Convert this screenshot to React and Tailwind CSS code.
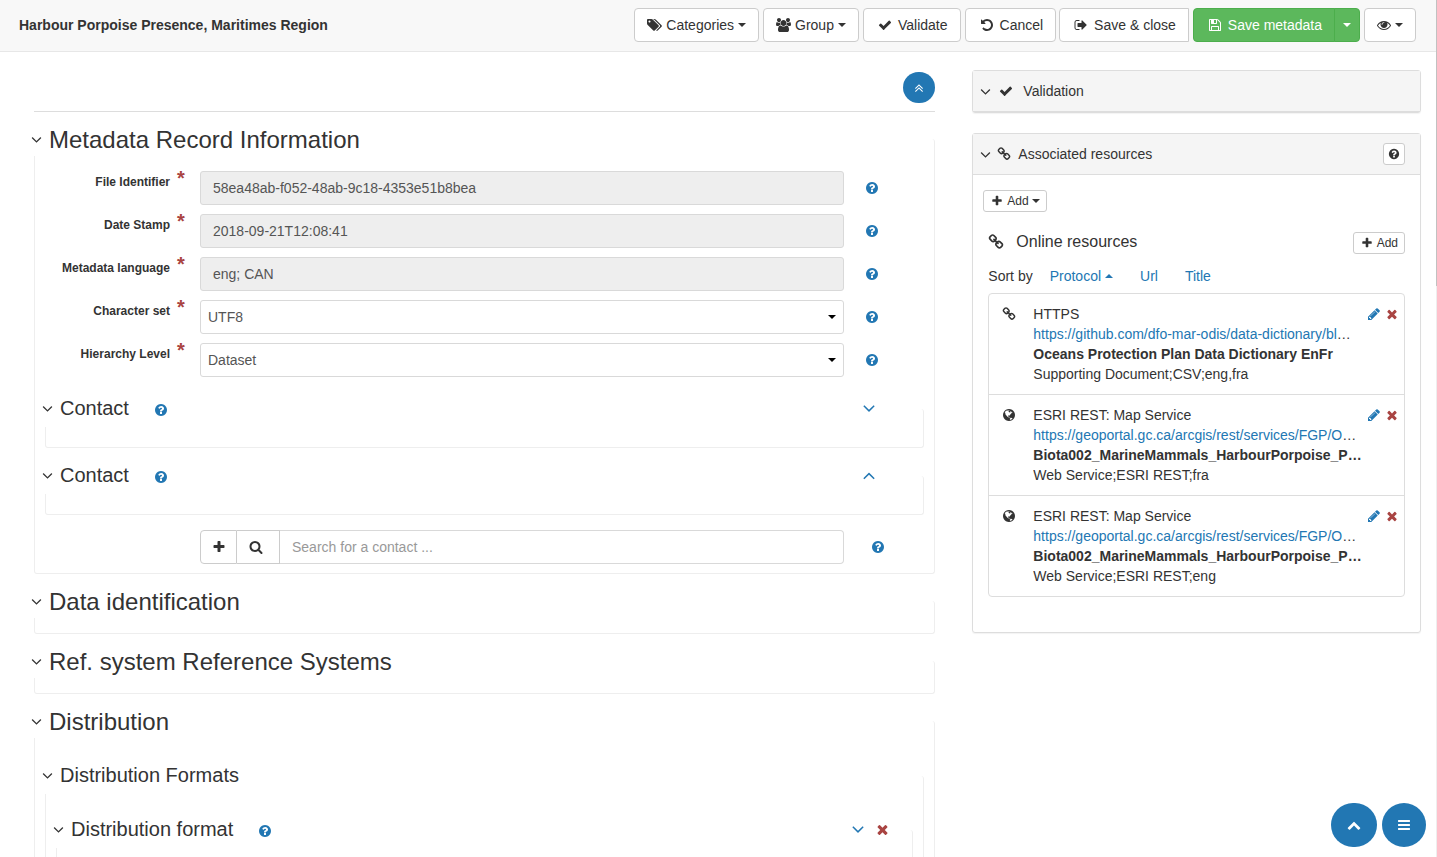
import React from "react";

const PATHS = {
  angleDown:
    "M1395 736q0 13-10 23l-466 466q-10 10-23 10t-23-10l-466-466q-10-10-10-23t10-23l50-50q10-10 23-10t23 10l393 393 393-393q10-10 23-10t23 10l50 50q10 10 10 23z",
  angleUp:
    "M1395 1184q0 13-10 23l-50 50q-10 10-23 10t-23-10l-393-393-393 393q-10 10-23 10t-23-10l-50-50q-10-10-10-23t10-23l466-466q10-10 23-10t23 10l466 466q10 10 10 23z",
  angleDoubleUp:
    "M1395 1312q0 13-10 23l-50 50q-10 10-23 10t-23-10l-393-393-393 393q-10 10-23 10t-23-10l-50-50q-10-10-10-23t10-23l466-466q10-10 23-10t23 10l466 466q10 10 10 23zm0-384q0 13-10 23l-50 50q-10 10-23 10t-23-10l-393-393-393 393q-10 10-23 10t-23-10l-50-50q-10-10-10-23t10-23l466-466q10-10 23-10t23 10l466 466q10 10 10 23z",
  check:
    "M1671 566q0 40-28 68l-724 724-136 136q-28 28-68 28t-68-28l-136-136-362-362q-28-28-28-68t28-68l136-136q28-28 68-28t68 28l294 295 656-657q28-28 68-28t68 28l136 136q28 28 28 68z",
  tags: "M448 448q0-53-37.5-90.5t-90.5-37.5-90.5 37.5-37.5 90.5 37.5 90.5 90.5 37.5 90.5-37.5 37.5-90.5zm1067 576q0 53-37 90l-491 492q-39 37-91 37-53 0-90-37l-715-716q-38-37-64.5-101t-26.5-117v-416q0-52 38-90t90-38h416q53 0 117 26.5t102 64.5l715 714q37 39 37 91zm384 0q0 53-37 90l-491 492q-39 37-91 37-36 0-59-14t-53-45l470-470q37-37 37-90 0-52-37-91l-715-714q-38-38-102-64.5t-117-26.5h224q53 0 117 26.5t102 64.5l715 714q37 39 37 91z",
  undo: "M1664 896q0 156-61 298t-164 245-245 164-298 61q-172 0-327-72.5t-264-204.5q-7-10-6.5-22.5t8.5-20.5l137-138q10-9 25-9 16 2 23 12 73 95 179 147t225 52q104 0 198.5-40.5t163.5-109.5 109.5-163.5 40.5-198.5-40.5-198.5-109.5-163.5-163.5-109.5-198.5-40.5q-98 0-188 35.5t-160 101.5l137 138q31 30 14 69-17 40-59 40h-448q-26 0-45-19t-19-45v-448q0-42 40-59 39-17 69 14l130 129q107-101 244.5-156.5t284.5-55.5q156 0 298 61t245 164 164 245 61 298z",
  signOut:
    "M704 1440q0 4 1 20t.5 26.5-3 23.5-10 19.5-20.5 6.5h-320q-119 0-203.5-84.5t-84.5-203.5v-704q0-119 84.5-203.5t203.5-84.5h320q13 0 22.5 9.5t9.5 22.5q0 4 1 20t.5 26.5-3 23.5-10 19.5-20.5 6.5h-320q-66 0-113 47t-47 113v704q0 66 47 113t113 47h312l11.5 1 11.5 3 8 5.5 7 9 2 13.5zm928-544q0 26-19 45l-544 544q-19 19-45 19t-45-19-19-45v-288h-448q-26 0-45-19t-19-45v-384q0-26 19-45t45-19h448v-288q0-26 19-45t45-19 45 19l544 544q19 19 19 45z",
  floppy:
    "M512 1536h768v-384h-768v384zm896 0h128v-896q0-14-10-38.5t-20-34.5l-281-281q-10-10-34-20t-39-10v416q0 40-28 68t-68 28h-576q-40 0-68-28t-28-68v-416h-128v1280h128v-416q0-40 28-68t68-28h832q40 0 68 28t28 68v416zm-384-928v-320q0-13-9.5-22.5t-22.5-9.5h-192q-13 0-22.5 9.5t-9.5 22.5v320q0 13 9.5 22.5t22.5 9.5h192q13 0 22.5-9.5t9.5-22.5zm640 32v928q0 40-28 68t-68 28h-1344q-40 0-68-28t-28-68v-1344q0-40 28-68t68-28h928q40 0 88 20t76 48l280 280q28 28 48 76t20 88z",
  eye: "M1664 960q-152-236-381-353 61 104 61 225 0 185-131.5 316.5t-316.5 131.5-316.5-131.5-131.5-316.5q0-121 61-225-229 117-381 353 133 205 333.5 326.5t434.5 121.5 434.5-121.5 333.5-326.5zm-720-384q0-20-14-34t-34-14q-125 0-214.5 89.5t-89.5 214.5q0 20 14 34t34 14 34-14 14-34q0-86 61-147t147-61q20 0 34-14t14-34zm848 384q0 34-20 69-140 230-376.5 368.5t-499.5 138.5-499.5-139-376.5-368q-20-35-20-69t20-69q140-229 376.5-368t499.5-139 499.5 139 376.5 368q20 35 20 69z",
  users:
    "M529 896q-162 5-265 128h-134q-82 0-138-40.5t-56-118.5q0-353 124-353 6 0 43.5 21t97.5 42.5 119 21.5q67 0 133-23-5 37-5 66 0 139 81 256zm1071 637q0 120-73 189.5t-194 69.5h-874q-121 0-194-69.5t-73-189.5q0-53 3.5-103.5t14-109 26.5-108.5 43-97.5 62-81 85.5-53.5 111.5-20q10 0 43 21.5t73 48 107 48 135 21.5 135-21.5 107-48 73-48 43-21.5q61 0 111.5 20t85.5 53.5 62 81 43 97.5 26.5 108.5 14 109 3.5 103.5zm-1024-1277q0 106-75 181t-181 75-181-75-75-181 75-181 181-75 181 75 75 181zm704 384q0 159-112.5 271.5t-271.5 112.5-271.5-112.5-112.5-271.5 112.5-271.5 271.5-112.5 271.5 112.5 112.5 271.5zm576 225q0 78-56 118.5t-138 40.5h-134q-103-123-265-128 81-117 81-256 0-29-5-66 66 23 133 23 59 0 119-21.5t97.5-42.5 43.5-21q124 0 124 353zm-128-609q0 106-75 181t-181 75-181-75-75-181 75-181 181-75 181 75 75 181z",
  help: "M1024 1376v-192q0-14-9-23t-23-9h-192q-14 0-23 9t-9 23v192q0 14 9 23t23 9h192q14 0 23-9t9-23zm256-672q0-88-55.5-163t-138.5-116-170-41q-243 0-371 213-15 24 8 42l132 100q7 6 19 6 16 0 25-12 53-68 86-92 34-24 86-24 48 0 85.5 26t37.5 59q0 38-20 61t-68 45q-63 28-115.5 86.5t-52.5 125.5v36q0 14 9 23t23 9h192q14 0 23-9t9-23q0-19 21.5-49.5t54.5-49.5q32-18 49-28.5t46-35 44.5-48 28-60.5 12.5-81zm384 192q0 209-103 385.5t-279.5 279.5-385.5 103-385.5-103-279.5-279.5-103-385.5 103-385.5 279.5-279.5 385.5-103 385.5 103 279.5 279.5 103 385.5z",
  plus: "M1600 736v192q0 40-28 68t-68 28h-416v416q0 40-28 68t-68 28h-192q-40 0-68-28t-28-68v-416h-416q-40 0-68-28t-28-68v-192q0-40 28-68t68-28h416v-416q0-40 28-68t68-28h192q40 0 68 28t28 68v416h416q40 0 68 28t28 68z",
  search:
    "M1216 832q0-185-131.5-316.5t-316.5-131.5-316.5 131.5-131.5 316.5 131.5 316.5 316.5 131.5 316.5-131.5 131.5-316.5zm512 832q0 52-38 90t-90 38q-54 0-90-38l-343-342q-179 124-399 124-143 0-273.5-55.5t-225-150-150-225-55.5-273.5 55.5-273.5 150-225 225-150 273.5-55.5 273.5 55.5 225 150 150 225 55.5 273.5q0 220-124 399l343 343q37 37 37 90z",
  link: "M1520 1216q0-40-28-68l-208-208q-28-28-68-28-42 0-72 32 3 3 19 18.5t21.5 21.5 15 19 13 25.5 3.5 27.5q0 40-28 68t-68 28q-15 0-27.5-3.5t-25.5-13-19-15-21.5-21.5-18.5-19q-33 31-33 73 0 40 28 68l206 207q27 27 68 27 40 0 68-26l147-146q28-28 28-67zm-703-705q0-40-28-68l-206-207q-28-28-68-28-39 0-68 27l-147 146q-28 28-28 67 0 40 28 68l208 208q27 27 68 27 42 0 72-31-3-3-19-18.5t-21.5-21.5-15-19-13-25.5-3.5-27.5q0-40 28-68t68-28q15 0 27.5 3.5t25.5 13 19 15 21.5 21.5 18.5 19q33-31 33-73zm895 705q0 120-85 203l-147 146q-83 83-203 83-121 0-204-85l-206-207q-83-83-83-203 0-123 88-209l-88-88q-86 88-208 88-120 0-204-84l-208-208q-84-84-84-204t85-203l147-146q83-83 203-83 121 0 204 85l206 207q83 83 83 203 0 123-88 209l88 88q86-88 208-88 120 0 204 84l208 208q84 84 84 204z",
  pencil:
    "M491 1536l91-91-235-235-91 91v107h128v128h107zm523-928q0-22-22-22-10 0-17 7l-542 542q-7 7-7 17 0 22 22 22 10 0 17-7l542-542q7-7 7-17zm-54-192l416 416-832 832h-416v-416zm683 96q0 53-37 90l-166 166-416-416 166-165q36-38 90-38 53 0 91 38l235 234q37 39 37 91z",
  times:
    "M1490 1322q0 40-28 68l-136 136q-28 28-68 28t-68-28l-294-294-294 294q-28 28-68 28t-68-28l-136-136q-28-28-28-68t28-68l294-294-294-294q-28-28-28-68t28-68l136-136q28-28 68-28t68 28l294 294 294-294q28-28 68-28t68 28l136 136q28 28 28 68t-28 68l-294 294 294 294q28 28 28 68z",
  chevronUp:
    "M1683 1331l-166 165q-19 19-45 19t-45-19l-531-531-531 531q-19 19-45 19t-45-19l-166-165q-19-19-19-45.5t19-45.5l742-741q19-19 45-19t45 19l742 741q19 19 19 45.5t-19 45.5z",
  bars: "M1664 1344v128q0 26-19 45t-45 19h-1408q-26 0-45-19t-19-45v-128q0-26 19-45t45-19h1408q26 0 45 19t19 45zm0-512v128q0 26-19 45t-45 19h-1408q-26 0-45-19t-19-45v-128q0-26 19-45t45-19h1408q26 0 45 19t19 45zm0-512v128q0 26-19 45t-45 19h-1408q-26 0-45-19t-19-45v-128q0-26 19-45t45-19h1408q26 0 45 19t19 45z",
  globe:
    "M896 128q209 0 385.5 103t279.5 279.5 103 385.5-103 385.5-279.5 279.5-385.5 103-385.5-103-279.5-279.5-103-385.5 103-385.5 279.5-279.5 385.5-103zm274 521q-2 1-9.5 9.5t-13.5 9.5q2 0 4.5-5t5-11 3.5-7q6-7 22-15 14-6 52-12 34-8 51 11-2-2 9.5-13t14.5-12q3-2 15-4.5t15-7.5l2-22q-12 1-17.5-7t-6.5-21q0 2-6 8 0-7-4.5-8t-11.5 1-9 1q-10-3-15-7.5t-8-16.5-4-15q-2-5-9.5-10.5t-9.5-10.5q-1-2-2.5-5.5t-3-6.5-4-5.5-5.5-2.5-7 5-7.5 10-4.5 5q-3-2-6-1.5t-4.5 1-4.5 3-5 3.5q-3 2-8.5 3t-8.5 2q15-5-1-11-10-4-16-3 9-4 7.5-12t-8.5-14h5q-1-4-8.5-8.5t-17.5-8.5-13-6q-8-5-34-9.5t-33-.5q-5 6-4.5 10.5t4 14 3.5 12.5q1 6-5.5 13t-6.5 12q0 7 14 15.5t10 21.5q-3 8-16 16t-16 12q-5 8-1.5 18.5t10.5 16.5q2 2 1.5 4t-3.5 4.5-5.5 4-6.5 3.5l-3 2q-11 5-20.5-6t-13.5-26q-7-25-16-30-23-8-29 1-5-13-41-26-25-9-58-4 6-1 0-15-7-15-19-12 3-6 4-17.5t1-13.5q3-13 12-23 1-1 7-8.5t9.5-13.5.5-6q35 4 50-11 5-5 11.5-17t10.5-17q9-6 14-5.5t14.5 5.5 14.5 5q14 1 15.5-11t-7.5-20q12 1 3-17-4-7-8-9-12-4-27 5-8 4 2 8-1-1-9.5 10.5t-16.5 17.5-16-5q-1-1-5.5-13.5t-9.5-13.5q-8 0-16 15 3-8-11-15t-24-8q19-12-8-27-7-4-20.5-5t-19.5 4q-5 7-5.5 11.5t5 8 10.5 5.5 11.5 4 8.5 3q14 10 8 14-2 1-8.5 3.5t-11.5 4.5-6 4q-3 4 0 14t-2 14q-5-5-9-17.5t-7-16.5q7 9-25 6l-10-1q-4 0-16 2t-20.5 1-13.5-8q-4-8 0-20 1-4 4-2-4-3-11-9.5t-10-8.5q-46 15-94 41 6 1 12-1 5-2 13-6.5t10-5.5q34-14 42-7l5-5q14 16 20 25-7-4-30-1-20 6-22 12 7 12 5 18-4-3-11.5-10t-14.5-11-15-5q-16 0-22 1-146 80-235 222 7 7 12 8 4 1 5 9t2.5 11 11.5-3q9 8 3 19 1-1 44 27 19 17 21 21 3 11-10 18-1-2-9-9t-9-4q-3 5 .5 18.5t10.5 12.5q-7 0-9.5 16t-2.5 35.5-1 23.5l2 1q-3 12 5.5 34.5t21.5 19.5q-13 3 20 43 6 8 8 9 3 2 12 7.5t15 10 10 10.5q4 5 10 22.5t14 23.5q-2 6 9.5 20t10.5 23q-1 0-2.5 1t-2.5 1q3 7 15.5 14t15.5 13q1 3 2 10t3 11 8 2q2-20-24-62-15-25-17-29-3-5-5.5-15.5t-4.5-14.5q2 0 6 1.5t8.5 3.5 7.5 4 2 3q-3 7 2 17.5t12 18.5 17 19 12 13q6 6 14 19.5t0 13.5q9 0 20 10.5t17 19.5q5 8 8 26t5 24q2 7 8.5 13.5t12.5 9.5l16 8 13 7q5 2 18.5 10.5t21.5 11.5q10 4 16 4t14.5-2.5 13.5-3.5q15-2 29 15t21 21q36 19 55 11-2 1 .5 7.5t8 15.5 9 14.5 5.5 8.5q5 6 18 15t18 15q6-4 7-9-3 8 7 20t18 10q14-3 14-32-31 15-49-18 0-1-2.5-5.5t-4-8.5-2.5-8.5 0-7.5 5-3q9 0 10-3.5t-2-12.5-4-13q-1-8-11-20t-12-15q-5 9-16 8t-16-9q0 1-1.5 5.5t-1.5 6.5q-13 0-15-1 1-3 2.5-17.5t3.5-22.5q1-4 5.5-12t7.5-14.5 4-12.5-4.5-9.5-17.5-2.5q-19 1-26 20-1 3-3 10.5t-5 11.5-9 7q-7 3-24 2t-24-5q-13-8-22.5-29t-9.5-37q0-10 2.5-26.5t3-25-5.5-24.5q3-2 9-9.5t10-10.5q2-1 4.5-1.5t4.5 0 4-1.5 3-6q-1-1-4-3-3-3-4-3 7 3 28.5-1.5t27.5 1.5q15 11 22-2 0-1-2.5-9.5t-.5-13.5q5 27 29 9 3 3 15.5 5t17.5 5q3 2 7 5.5t5.5 4.5 5-.5 8.5-6.5q10 14 12 24 11 40 19 44 7 3 11 2t4.5-9.5 0-14-1.5-12.5l-1-8v-18l-1-8q-15-3-18.5-12t1.5-18.5 15-18.5q1-1 8-3.5t15.5-6.5 12.5-8q21-19 15-35 7 0 11-9-1 0-5-3t-7.5-5-4.5-2q9-5 2-16 5-3 7.5-11t7.5-10q9 12 21 2 8-8 1-16 5-7 20.5-10.5t18.5-9.5q7 2 8-2t1-12 3-12q4-5 15-9t13-5l17-11q3-4 0-4 18 2 31-11 10-11-6-20 3-6-3-9.5t-15-5.5q3-1 11.5-.5t10.5-1.5q15-10-7-16-17-5-43 12zm-163 877q206-36 351-189-3-3-12.5-4.5t-12.5-3.5q-18-7-24-8 1-7-2.5-13t-8-9-12.5-8-11-7q-2-2-7-6t-7-5.5-7.5-4.5-8.5-2-10 1l-3 1q-3 1-5.5 2.5t-5.5 3-4 3 0 2.5q-21-17-36-22-5-1-11-5.5t-10.5-7-10-1.5-11.5 7q-5 5-6 15t-2 13q-7-5 0-17.5t2-18.5q-3-6-10.5-4.5t-12 4.5-11.5 8.5-9 6.5-8.5 5.5-8.5 7.5q-3 4-6 12t-5 11q-2-4-11.5-6.5t-9.5-5.5q2 10 4 35t5 38q7 31-12 48-27 25-29 40-4 22 12 26 0 7-8 20.5t-7 21.5q0 6 2 16z",
};

const VIEW_BOXES = { tags: "0 0 1920 1792", users: "-64 0 1920 1792" };

function Icon({ name, className = "size-3.5" }) {
  return (
    <svg
      aria-hidden="true"
      viewBox={VIEW_BOXES[name] || "0 0 1792 1792"}
      fill="currentColor"
      className={"shrink-0 " + className}
    >
      <path d={PATHS[name]} />
    </svg>
  );
}

function Caret({ up = false, className = "" }) {
  return (
    <svg aria-hidden="true" viewBox="0 0 8 4" fill="currentColor" className={"h-1 w-2 shrink-0 " + className}>
      <path d={up ? "M0 4L4 0L8 4Z" : "M0 0L4 4L8 0Z"} />
    </svg>
  );
}

function ToolButton({ icon, wide, caret, children, className = "rounded", ...rest }) {
  return (
    <button
      type="button"
      className={
        "flex h-[34px] items-center gap-1 border border-[#ccc] bg-white px-3 text-sm whitespace-nowrap text-[#333] " +
        className
      }
      {...rest}
    >
      <span className={wide ? "flex w-[18px] justify-center" : "flex"}>
        <Icon name={icon} className={VIEW_BOXES[icon] ? "h-3.5 w-[15px]" : "size-3.5"} />
      </span>
      {children}
      {caret && <Caret />}
    </button>
  );
}

function SmallButton({ children, className = "px-1.5", ...rest }) {
  return (
    <button
      type="button"
      className={
        "flex h-[22px] items-center gap-[3px] rounded-[3px] border border-[#ccc] bg-white text-xs text-[#333] " +
        className
      }
      {...rest}
    >
      {children}
    </button>
  );
}

function Help({ className = "" }) {
  return (
    <button type="button" aria-label="Help" className={"flex text-[#2277b3] " + className}>
      <Icon name="help" />
    </button>
  );
}

function Section({ title, sub, help, open, removable, className = "mt-2.5", children }) {
  return (
    <fieldset className={"min-w-0 rounded-[3px] border border-t-0 border-[#eee] px-2.5 " + className}>
      <legend
        className={
          "-ml-[17px] flex w-[calc(100%+5px)] items-center bg-white " +
          (sub ? "h-9 pb-0.5 text-[20px]" : "h-[34px] text-[24px]")
        }
      >
        <button type="button" className="flex items-center whitespace-nowrap">
          <Icon name="angleDown" className="mr-1 size-[17px]" />
          <span className={sub ? "" : "pt-0.5"}>{title}</span>
        </button>
        {help && <Help className="ml-[25px] pt-[3px]" />}
        {open !== undefined && (
          <span className="ml-auto flex items-center text-[#2277b3]">
            <button type="button" aria-label={open ? "Collapse" : "Expand"} className="flex">
              <Icon name={open ? "angleUp" : "angleDown"} className="size-5" />
            </button>
            <span className="flex w-[22px] justify-end">
              {removable && (
                <button type="button" aria-label="Remove" className="flex text-[#a94442]">
                  <Icon name="times" className="size-[15px]" />
                </button>
              )}
            </span>
          </span>
        )}
      </legend>
      {children}
    </fieldset>
  );
}

function Field({ id, label, value, options }) {
  return (
    <div className="grid grid-cols-[125px_30px_1fr_80px]">
      <label htmlFor={id} className="pt-[3px] text-right text-xs leading-4 font-bold whitespace-nowrap">
        {label}
      </label>
      <span className="pl-[7px] text-[20px] leading-[14px] font-bold text-[#a94442]">*</span>
      {options ? (
        <div className="grid items-center">
          <select
            id={id}
            defaultValue={value}
            className="col-start-1 row-start-1 h-[34px] w-full appearance-none rounded-[3px] border border-[#d9d9d9] bg-white px-[7px] text-sm text-[#555]"
          >
            {options.map((o) => (
              <option key={o}>{o}</option>
            ))}
          </select>
          <Caret className="pointer-events-none col-start-1 row-start-1 mr-2 justify-self-end text-black" />
        </div>
      ) : (
        <input
          id={id}
          type="text"
          readOnly
          value={value}
          className="h-[34px] w-full rounded-[3px] border border-[#d9d9d9] bg-[#eee] px-3 text-sm text-[#555]"
        />
      )}
      <Help className="self-center justify-self-start pl-[21px]" />
    </div>
  );
}

const RESOURCES = [
  {
    icon: "link",
    protocol: "HTTPS",
    url: "https://github.com/dfo-mar-odis/data-dictionary/bl",
    title: "Oceans Protection Plan Data Dictionary EnFr",
    info: "Supporting Document;CSV;eng,fra",
  },
  {
    icon: "globe",
    protocol: "ESRI REST: Map Service",
    url: "https://geoportal.gc.ca/arcgis/rest/services/FGP/O",
    title: "Biota002_MarineMammals_HarbourPorpoise_P…",
    info: "Web Service;ESRI REST;fra",
  },
  {
    icon: "globe",
    protocol: "ESRI REST: Map Service",
    url: "https://geoportal.gc.ca/arcgis/rest/services/FGP/O",
    title: "Biota002_MarineMammals_HarbourPorpoise_P…",
    info: "Web Service;ESRI REST;eng",
  },
];

function Resource({ icon, protocol, url, title, info }) {
  return (
    <li className="flex border-b border-[#ddd] py-2.5 pr-[5px] pl-[13px] leading-5 last:border-b-0">
      <span className="flex h-5 w-[31px] shrink-0 items-center">
        <Icon name={icon} />
      </span>
      <div className="min-w-0 flex-1 overflow-hidden whitespace-nowrap">
        <div>{protocol}</div>
        <div>
          <a href={url} className="text-[#2277b3]">
            {url}
          </a>
          …
        </div>
        <div className="font-bold">{title}</div>
        <div>{info}</div>
      </div>
      <div className="flex h-5 shrink-0 items-center gap-1">
        <button type="button" aria-label="Edit" className="flex text-[#2277b3]">
          <Icon name="pencil" />
        </button>
        <button type="button" aria-label="Delete" className="flex text-[#a94442]">
          <Icon name="times" />
        </button>
      </div>
    </li>
  );
}

export default function App() {
  return (
    <div className="flex h-screen bg-white font-['Liberation_Sans',Arial,sans-serif] text-sm leading-5 text-[#333]">
      <div className="flex min-w-0 flex-1 flex-col">
        <header className="flex shrink-0 items-center justify-between border-b border-[#e7e7e7] bg-[#f8f8f8] pt-2 pr-5 pb-[9px] pl-[19px]">
          <h1 className="font-bold">Harbour Porpoise Presence, Maritimes Region</h1>
          <div className="flex gap-1">
            <ToolButton icon="tags" caret>
              Categories
            </ToolButton>
            <ToolButton icon="users" caret>
              Group
            </ToolButton>
            <ToolButton icon="check" wide>
              Validate
            </ToolButton>
            <ToolButton icon="undo" wide>
              Cancel
            </ToolButton>
            <ToolButton icon="signOut" wide className="-ml-px rounded-l">
              Save &amp; close
            </ToolButton>
            <div className="flex">
              <button
                type="button"
                className="flex h-[34px] items-center gap-1 rounded-l border border-[#4cae4c] bg-[#5cb85c] px-3 whitespace-nowrap text-white"
              >
                <span className="flex w-[18px] justify-center">
                  <Icon name="floppy" />
                </span>
                Save metadata
              </button>
              <button
                type="button"
                aria-label="More save options"
                className="-ml-px flex h-[34px] items-center rounded-r border border-[#4cae4c] bg-[#5cb85c] px-2 text-white"
              >
                <Caret />
              </button>
            </div>
            <ToolButton icon="eye" caret aria-label="View" />
          </div>
        </header>

        <div className="grid min-h-0 flex-1 grid-cols-[2fr_1fr] overflow-y-auto [scrollbar-width:none]">
          <main className="min-w-0 pr-[22px] pb-5 pl-[34px]">
            <div className="flex justify-end border-b border-[#ddd] pt-5 pb-2">
              <button
                type="button"
                aria-label="Collapse all"
                className="flex h-[31px] w-8 items-center justify-center rounded-full bg-[#2277b3] text-white"
              >
                <Icon name="angleDoubleUp" />
              </button>
            </div>

            <Section title="Metadata Record Information" className="mt-2.5 pb-[9px]">
              <div className="flex flex-col gap-[9px] pt-[15px]">
                <Field id="file-id" label="File Identifier" value="58ea48ab-f052-48ab-9c18-4353e51b8bea" />
                <Field id="date-stamp" label="Date Stamp" value="2018-09-21T12:08:41" />
                <Field id="language" label="Metadata language" value="eng; CAN" />
                <Field id="charset" label="Character set" value="UTF8" options={["UTF8", "UTF16"]} />
                <Field id="level" label="Hierarchy Level" value="Dataset" options={["Dataset", "Series"]} />
              </div>
              <Section sub title="Contact" help open={false} className="mt-[14px] pb-5" />
              <Section sub title="Contact" help open className="mt-2.5 pb-5" />
              <div className="grid grid-cols-[155px_1fr_80px] pt-[15px]">
                <div className="col-start-2 flex">
                  <button
                    type="button"
                    aria-label="Add contact"
                    className="flex h-[34px] w-[37px] items-center justify-center rounded-l border border-[#ccc] bg-white"
                  >
                    <Icon name="plus" />
                  </button>
                  <button
                    type="button"
                    aria-label="Search"
                    className="flex h-[34px] w-[43px] items-center border-y border-r border-[#ccc] bg-white pl-3"
                  >
                    <Icon name="search" />
                  </button>
                  <input
                    type="search"
                    aria-label="Search for a contact"
                    placeholder="Search for a contact ..."
                    className="h-[34px] min-w-0 flex-1 rounded-r border border-l-0 border-[#d9d9d9] bg-white px-3 text-sm placeholder:text-[#999]"
                  />
                </div>
                <Help className="self-center justify-self-start pl-[27px]" />
              </div>
            </Section>

            <Section title="Data identification" className="mt-2.5 pb-[15px]" />
            <Section title="Ref. system Reference Systems" className="mt-2.5 pb-[15px]" />
            <Section title="Distribution" className="mt-2.5 pb-[15px]">
              <Section sub title="Distribution Formats" className="mt-5 pb-5">
                <Section sub title="Distribution format" help open={false} removable className="mt-[18px] pb-5" />
              </Section>
            </Section>
          </main>

          <aside className="flex min-w-0 flex-col gap-5 px-[15px] pt-[18px]">
            <section className="rounded-[3px] border border-[#ddd] shadow-[0_1px_1px_rgba(0,0,0,0.05)]">
              <div className="flex h-[41px] items-center border-b border-[#ddd] bg-[#f5f5f5] pl-1">
                <button type="button" className="flex items-center">
                  <Icon name="angleDown" className="mr-[3px] size-[17px]" />
                  <span className="mr-2 flex w-[18px] justify-center">
                    <Icon name="check" />
                  </span>
                  Validation
                </button>
              </div>
            </section>

            <section className="rounded-[3px] border border-[#ddd] shadow-[0_1px_1px_rgba(0,0,0,0.05)]">
              <div className="flex h-[41px] items-center justify-between border-b border-[#ddd] bg-[#f5f5f5] pr-[15px] pl-1">
                <button type="button" className="flex items-center">
                  <Icon name="angleDown" className="mr-[3px] size-[17px]" />
                  <Icon name="link" className="mr-[7px] size-3.5" />
                  Associated resources
                </button>
                <SmallButton aria-label="Help" className="w-[22px] justify-center">
                  <Icon name="help" className="size-3" />
                </SmallButton>
              </div>
              <div className="pt-[15px] pr-[15px] pb-[35px] pl-2.5">
                <SmallButton className="px-1.5">
                  <span className="flex w-[14px] justify-center">
                    <Icon name="plus" className="size-3" />
                  </span>
                  Add
                  <Caret />
                </SmallButton>
                <div className="pl-[5px]">
                  <div className="mt-5 flex items-start justify-between">
                    <h2 className="flex items-center gap-3 text-base leading-5 font-medium">
                      <Icon name="link" className="size-4" />
                      Online resources
                    </h2>
                    <SmallButton className="px-1.5">
                      <span className="flex w-[14px] justify-center">
                        <Icon name="plus" className="size-3" />
                      </span>
                      Add
                    </SmallButton>
                  </div>
                  <div className="mt-3 mb-[7px] flex items-center">
                    <span className="mr-[17px]">Sort by</span>
                    <div className="flex gap-[27px] text-[#2277b3]">
                      <button type="button" className="flex items-center gap-1">
                        Protocol
                        <Caret up />
                      </button>
                      <button type="button">Url</button>
                      <button type="button">Title</button>
                    </div>
                  </div>
                  <ul className="rounded border border-[#ddd]">
                    {RESOURCES.map((r) => (
                      <Resource key={r.info} {...r} />
                    ))}
                  </ul>
                </div>
              </div>
            </section>
          </aside>
        </div>
      </div>

      <div aria-hidden="true" className="flex w-px shrink-0 flex-col bg-[#eee]">
        <div className="h-1/3 bg-[#c1c1c1]" />
      </div>

      <div className="fixed right-[11px] bottom-2.5 flex gap-[5px]">
        <button
          type="button"
          aria-label="Back to top"
          className="flex h-11 w-[46px] items-center justify-center rounded-full bg-[#2277b3] text-white"
        >
          <Icon name="chevronUp" />
        </button>
        <button
          type="button"
          aria-label="Menu"
          className="flex size-11 items-center justify-center rounded-full bg-[#2277b3] text-white"
        >
          <Icon name="bars" />
        </button>
      </div>
    </div>
  );
}
